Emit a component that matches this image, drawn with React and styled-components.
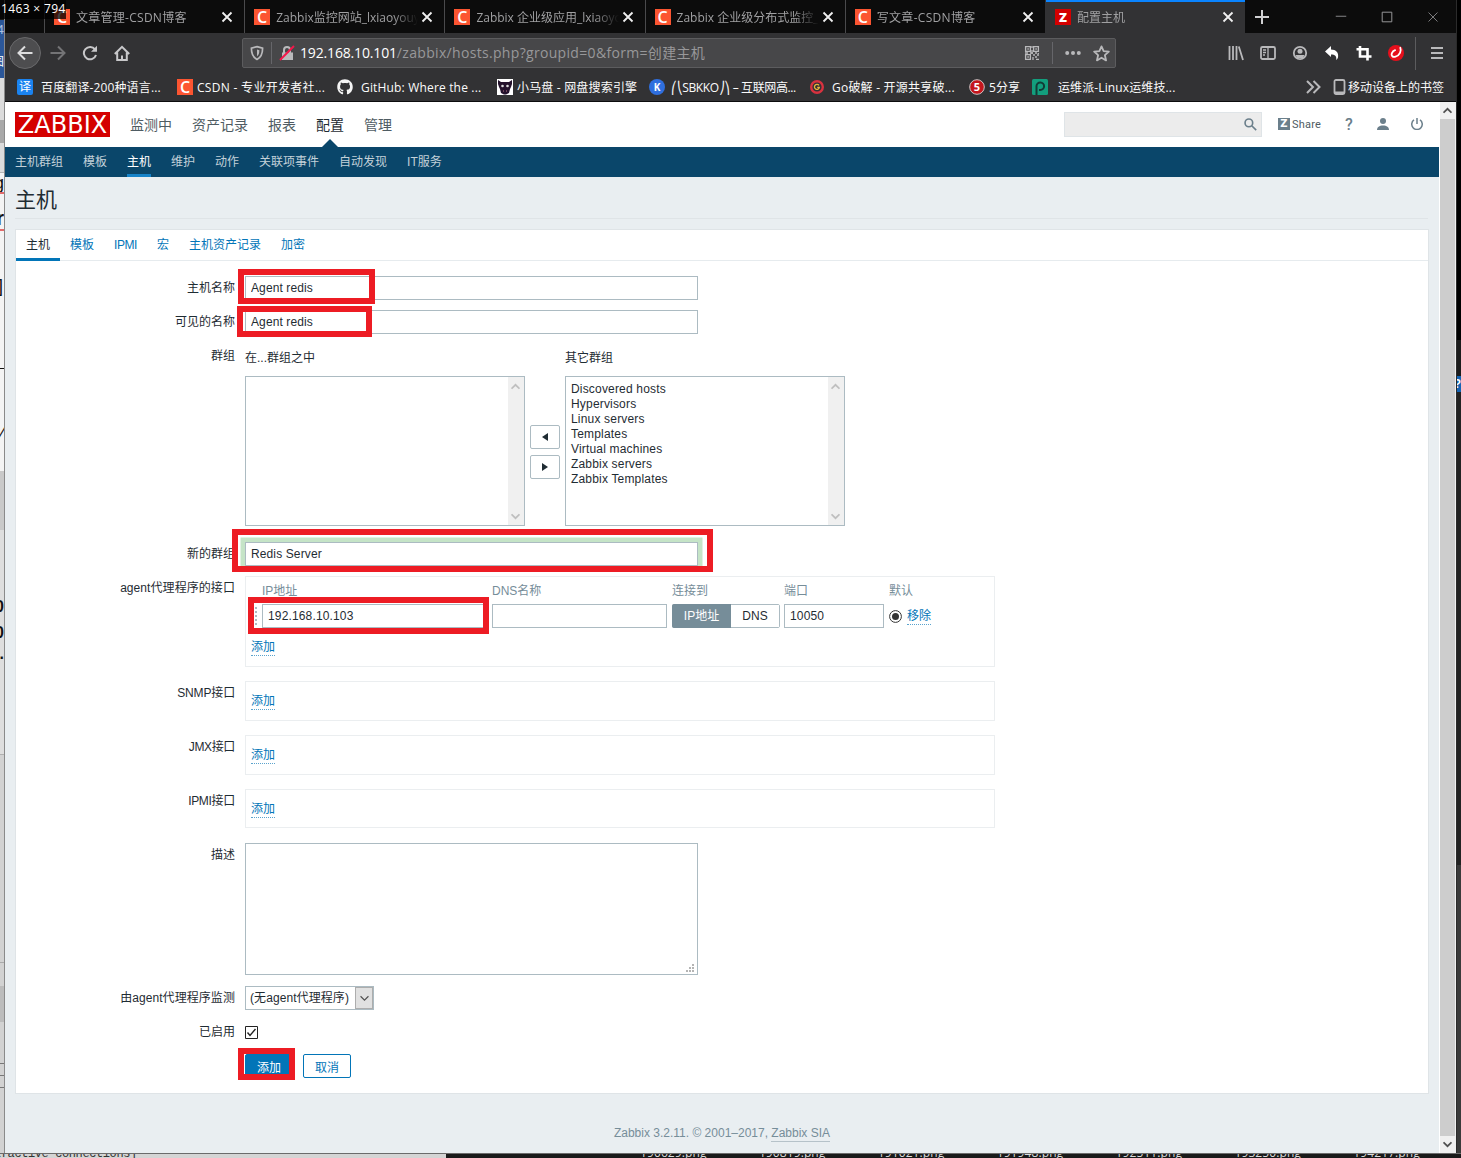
import styled, { createGlobalStyle, css } from "styled-components";
import { FaGithub } from "react-icons/fa";

const uiFont = `"Open Sans", "Noto Sans CJK SC", sans-serif`;
const pageFont = `"Liberation Sans", "Noto Sans CJK SC", sans-serif`;

const GlobalStyle = createGlobalStyle`
  * {
    box-sizing: border-box;
  }

  body {
    margin: 0;
    overflow: hidden;
    background: #111;
    font-family: ${pageFont};
    font-size: 12px;
  }
`;

/* ---------- desktop around the window ---------- */

const Screen = styled.div`
  position: relative;
  display: grid;
  grid-template-columns: 5px 1451px 5px;
  grid-template-rows: 1153px 5px;
  width: 1461px;
  height: 1158px;
  overflow: hidden;
`;

const LeftEdge = styled.div`
  position: relative;
  overflow: hidden;
  background: linear-gradient(
    to bottom,
    #1b1b1b 0 20px,
    #2b579a 20px 78px,
    #dcdcdc 78px 172px,
    #f4f4f4 172px 471px,
    #c9c9c9 471px 530px,
    #dedede 530px 755px,
    #d2d2d2 755px 1153px
  );
  border-right: 1px solid #8a8a8a;
`;

const Fragment = styled.span`
  position: absolute;
  top: ${(p) => p.$top}px;
  right: ${(p) => p.$right || 0}px;
  color: ${(p) => p.$color || "#111"};
  font-size: ${(p) => p.$size || 16}px;
  font-weight: ${(p) => (p.$bold ? 700 : 400)};
  line-height: 1;
  white-space: nowrap;
`;

const EdgeLine = styled.i`
  position: absolute;
  left: 0;
  top: ${(p) => p.$top}px;
  width: 5px;
  height: ${(p) => p.$height || 1}px;
  background: ${(p) => p.$color || "#777"};
`;

const RightEdge = styled.div`
  position: relative;
  overflow: hidden;
  background: linear-gradient(
    to bottom,
    #000 0 340px,
    #1c1c1c 340px 376px,
    #1464b4 376px 392px,
    #222 392px 865px,
    #3a3a3a 865px 1153px
  );
  border-left: 1px solid #2b2b2b;
`;

const BottomEdge = styled.div`
  grid-column: 1 / 4;
  display: flex;
  overflow: hidden;
  background: #1a1a1a;
  border-top: 1px solid #6b6b6b;
`;

const Console = styled.div`
  flex: none;
  width: 446px;
  background: #d4d4d4;
  color: #333;
  font: 12px/14px "Liberation Mono", monospace;
  letter-spacing: -0.4px;

  span {
    display: block;
    margin-top: -7px;
    margin-left: -6px;
  }
`;

const FileNames = styled.div`
  display: flex;
  flex: none;
  padding-left: 194px;
  color: #ddd;
  font: 12px/14px ${uiFont};
  letter-spacing: 0.1px;

  span {
    width: 118.9px;
    margin-top: -8px;
  }
`;

const SizeTip = styled.div`
  position: absolute;
  left: 0;
  top: 0;
  width: 66px;
  height: 19px;
  padding-left: 1px;
  background: rgba(0, 0, 0, 0.75);
  color: #fff;
  font: 12px/18px ${uiFont};
  letter-spacing: 0.35px;
  white-space: nowrap;
`;

/* ---------- browser chrome ---------- */

const Window = styled.div`
  display: flex;
  flex-direction: column;
  width: 1451px;
  height: 1153px;
  background: #323234;
`;

const TabStrip = styled.div`
  display: flex;
  height: 33px;
  padding-left: 39px;
  background: #0c0c0c;
`;

const Tab = styled.div`
  display: flex;
  align-items: center;
  width: 200.2px;
  padding: 1px 11px 0 9px;
  border-left: 1px solid #4a4a4c;
  color: #a0a0a2;
  font: 12px ${uiFont};
  letter-spacing: ${(p) => p.$track || 0}px;

  ${(p) =>
    p.$active &&
    css`
      background: #323234;
      border-left-color: #323234;
      box-shadow: inset 0 2px #0a84ff;
    `}
`;

const TabTitle = styled.span`
  flex: 1;
  margin: -1px 3px 0 6px;
  overflow: hidden;
  white-space: nowrap;
  mask-image: linear-gradient(to right, #000 calc(100% - 25px), transparent);
`;

const Favicon = styled.i`
  display: flex;
  flex: none;
  align-items: center;
  justify-content: center;
  width: 16px;
  height: 16px;
  border-radius: ${(p) => (p.$round ? "50%" : p.$soft ? "2px" : 0)};
  background: ${(p) => p.$bg};
  color: ${(p) => p.$fg || "#fff"};
  font: ${(p) => p.$weight || 700} ${(p) => p.$size || 13}px/1 ${uiFont};
  letter-spacing: 0;
`;

const WindowButtons = styled.div`
  display: flex;
  flex: 1;
  align-items: center;
  justify-content: space-between;
  padding: 0 17px 0 9px;
`;

const CaptionButtons = styled.div`
  display: flex;
  gap: 34px;
`;

const Toolbar = styled.div`
  display: flex;
  align-items: center;
  height: 40px;
  padding-left: 4px;
`;

const BackButton = styled.div`
  display: flex;
  align-items: center;
  justify-content: center;
  width: 32px;
  height: 32px;
  border: 1px solid #69696b;
  border-radius: 50%;
  background: #4d4d4f;
`;

const NavIcons = styled.div`
  display: flex;
  gap: 16px;
  width: 201px;
  padding-left: 9px;
`;

const UrlBar = styled.div`
  display: flex;
  align-items: center;
  width: 874px;
  height: 30px;
  padding: 0 5px 0 6px;
  border: 1px solid #5c5c5e;
  border-radius: 2px;
  background: #474749;
  color: #98989a;
  font: 14px ${uiFont};
  letter-spacing: 0.32px;

  b {
    color: #fff;
    font-weight: 400;
    letter-spacing: -0.16px;
  }
`;

const UrlText = styled.span`
  flex: 1;
  margin: -2px 0 0 5px;
  white-space: nowrap;
`;

const UrlSeparator = styled.i`
  width: 1px;
  height: 22px;
  margin: ${(p) => p.$margin};
  background: #66666a;
`;

const UrlActions = styled.div`
  display: flex;
  align-items: center;
  gap: 12px;
`;

const ToolbarIcons = styled.div`
  display: flex;
  align-items: center;
  gap: 16px;
  margin-left: 112px;
`;

const ToolbarSeparator = styled.i`
  width: 1px;
  height: 33px;
  margin: 0 -3px 0 -5px;
  background: #5c5c5e;
`;

const Bookmarks = styled.div`
  display: flex;
  align-items: center;
  height: 28px;
  padding-left: 12px;
  color: #fbfbfb;
  font: 12px ${uiFont};
`;

const Bookmark = styled.div`
  display: flex;
  flex: none;
  align-items: center;
  gap: ${(p) => p.$gap || 4}px;
  width: ${(p) => p.$width}px;
  letter-spacing: ${(p) => p.$track || 0}px;
  white-space: nowrap;
`;

const Viewport = styled.div`
  display: flex;
  flex: 1;
  border-top: 1px solid #0c0c0d;
  background: #fff;
`;

const Scrollbar = styled.div`
  display: flex;
  flex-direction: column;
  width: 16px;
  margin-left: 1px;
  background: #f0f0f0;
`;

const ScrollArrow = styled.div`
  display: flex;
  align-items: center;
  justify-content: center;
  height: 17px;
  padding-right: 1px;
`;

const ScrollThumb = styled.div`
  flex: 1;
  margin-right: 1px;
  background: #cdcdcd;
`;

/* ---------- zabbix page ---------- */

const Page = styled.div`
  display: flex;
  flex-direction: column;
  width: 1434px;
  background: #e9eef1;
  color: #1f2c33;
`;

const TopBar = styled.header`
  display: flex;
  align-items: center;
  height: 45px;
  padding: 0 16px 0 10px;
  background: #fff;
`;

const Logo = styled.div`
  width: 95px;
  height: 25px;
  background: #d40000;
  color: #fff;
  font: 24px/26px "DejaVu Sans", sans-serif;
  text-align: center;
`;

const MainMenu = styled.nav`
  display: flex;
  flex: 1;
  gap: 20px;
  height: 45px;
  margin-left: 20px;
  font-size: 14px;
`;

const MainItem = styled.a`
  position: relative;
  height: 45px;
  color: ${(p) => (p.$active ? "#1f2c33" : "#4f5c63")};
  line-height: 47px;

  ${(p) =>
    p.$active &&
    css`
      &::after {
        content: "";
        position: absolute;
        left: 6px;
        bottom: 0;
        border: 8px solid transparent;
        border-top: 0;
        border-bottom-color: #0a466a;
      }
    `}
`;

const SearchBox = styled.div`
  display: flex;
  align-items: center;
  justify-content: flex-end;
  width: 198px;
  height: 25px;
  padding: 0 4px 1px 0;
  border: 1px solid #dfe4e7;
  background: #ececec;
`;

const Share = styled.a`
  display: flex;
  align-items: center;
  gap: 2px;
  width: 67px;
  margin: -1px 0 0 16px;
  color: #4f5c63;
  font: 11px Roboto, sans-serif;
  letter-spacing: 0.2px;
`;

const ShareMark = styled.i`
  width: 12px;
  height: 12px;
  background: #6b7f8b;
  color: #fff;
  font: 700 10px/12px "DejaVu Sans", sans-serif;
  letter-spacing: 0;
  text-align: center;
`;

const HelpMark = styled.span`
  width: 32px;
  margin-top: -1px;
  color: #6b7f8b;
  font: 500 16px Roboto, sans-serif;
`;

const AccountIcons = styled.div`
  display: flex;
  gap: 22px;
  margin-top: -1px;
`;

const SubMenu = styled.nav`
  display: flex;
  gap: 20px;
  height: 30px;
  padding-left: 10px;
  background: #0a466a;
`;

const SubItem = styled.a`
  height: 30px;
  color: ${(p) => (p.$active ? "#fff" : "#c3d1d9")};
  line-height: 31px;
  border-bottom: ${(p) => (p.$active ? "3px solid #1683c9" : 0)};
`;

const Title = styled.h1`
  height: 42px;
  margin: 0 11px 10px 10px;
  border-bottom: 1px solid #dfe4e7;
  font-size: 21px;
  font-weight: 400;
  line-height: 45px;
`;

const FormBox = styled.main`
  width: 1414px;
  height: 865px;
  margin-left: 10px;
  border: 1px solid #dfe4e7;
  background: #fff;
`;

const FormTabs = styled.div`
  display: flex;
  height: 31px;
  border-bottom: 1px solid #e6ebee;
`;

const FormTab = styled.a`
  height: 31px;
  padding: 0 10px;
  border-bottom: ${(p) => (p.$active ? "3px solid #0275b8" : 0)};
  color: ${(p) => (p.$active ? "#1f2c33" : "#0275b8")};
  line-height: 31px;
  letter-spacing: ${(p) => p.$track || 0}px;
`;

const Form = styled.div`
  display: flex;
  flex-direction: column;
  padding-top: 15px;
`;

const Row = styled.div`
  display: flex;
  gap: 10px;
  margin-bottom: ${(p) => p.$after ?? 10}px;
`;

const Label = styled.label`
  width: 219px;
  height: 24px;
  line-height: 25px;
  letter-spacing: ${(p) => p.$track || 0}px;
  text-align: right;
`;

const Field = styled.div`
  position: relative;
  display: flex;
`;

const CheckField = styled(Field)`
  align-items: center;
  height: 24px;
`;

const Input = styled.input`
  width: ${(p) => p.$width || 453}px;
  height: 24px;
  padding: 0 5px;
  border: 1px solid #acbbc2;
  border-radius: 0;
  outline: 0;
  background: #fff;
  color: #1f2c33;
  font: 12px ${pageFont};
  letter-spacing: ${(p) => p.$track || 0}px;
  box-shadow: ${(p) => (p.$focus ? "0 0 0 4.5px #c5e4c7" : "none")};
`;

/* red frame drawn over the highlighted fields */
const Marker = styled.i`
  position: absolute;
  left: ${(p) => p.$left}px;
  top: ${(p) => p.$top}px;
  width: ${(p) => p.$width}px;
  height: ${(p) => p.$height}px;
  border: 6px solid #ed1c24;
  pointer-events: none;
`;

const ListColumn = styled.div`
  width: 280px;

  h4 {
    height: 32px;
    margin: 0;
    font-size: 12px;
    font-weight: 400;
    line-height: 28px;
  }
`;

const ListBox = styled.div`
  display: flex;
  justify-content: space-between;
  height: 150px;
  border: 1px solid #acbbc2;

  ul {
    margin: 0;
    padding: 5px;
    list-style: none;
    line-height: 15px;
    letter-spacing: 0.18px;
  }
`;

const ListScroll = styled.div`
  display: flex;
  flex-direction: column;
  justify-content: space-between;
  align-items: center;
  width: 16px;
  padding: 5px 2px 4px 0;
  background: #f0f0f0;
`;

const MoveButtons = styled.div`
  display: flex;
  flex-direction: column;
  gap: 6px;
  width: 40px;
  padding: 81px 5px 0;
`;

const MoveButton = styled.button`
  display: flex;
  align-items: center;
  justify-content: center;
  width: 30px;
  height: 24px;
  padding: 0;
  border: 1px solid #acbbc2;
  border-radius: 2px;
  background: #fff;
`;

const InterfaceBox = styled.div`
  width: 750px;
  height: ${(p) => p.$height}px;
  padding: ${(p) => (p.$table ? "0 5px" : "7px 5px")};
  border: 1px solid #ebeef0;
`;

const InterfaceGrid = styled.div`
  display: grid;
  grid-template-columns: 11px 226px 175px 109px 100px auto;
  column-gap: 4px;
  align-items: center;
  margin: 0 0 7px -4px;
`;

const Head = styled.span`
  height: 27px;
  margin-left: ${(p) => p.$shift || 0}px;
  color: #768d99;
  line-height: 28px;
`;

const Grip = styled.i`
  width: 2px;
  height: 18px;
  margin-left: 8px;
  background: repeating-linear-gradient(#acbbc2 0 2px, transparent 2px 4px);
`;

const Segmented = styled.div`
  display: flex;
  width: 108px;
  height: 24px;
  margin-left: 1px;
  border: 1px solid #acbbc2;
  border-radius: 2px;
  line-height: 22px;
  text-align: center;
`;

const Segment = styled.span`
  width: ${(p) => p.$width}px;
  margin: ${(p) => (p.$on ? "-1px 0 -1px -1px" : 0)};
  border-radius: ${(p) => (p.$on ? "2px 0 0 2px" : 0)};
  background: ${(p) => (p.$on ? "#768d99" : "#fff")};
  color: ${(p) => (p.$on ? "#fff" : "#1f2c33")};
  line-height: ${(p) => (p.$on ? 24 : 22)}px;
`;

const DefaultCell = styled.div`
  display: flex;
  align-items: center;
  gap: 5px;
  margin-left: 1px;
`;

const Link = styled.a`
  display: inline-block;
  height: 17px;
  border-bottom: 1px dotted #5ba3cd;
  color: #0275b8;
  line-height: 17px;
`;

const AddLine = styled.div`
  display: flex;
  padding-top: 4px;
`;

const TextArea = styled.div`
  display: flex;
  align-items: flex-end;
  justify-content: flex-end;
  width: 453px;
  height: 132px;
  padding: 2px 3px;
  border: 1px solid #acbbc2;
`;

const Select = styled.div`
  display: flex;
  width: 129px;
  height: 24px;
  padding-left: 4px;
  border: 1px solid #acbbc2;
  line-height: 23px;

  span {
    flex: 1;
    letter-spacing: 0.08px;
    white-space: nowrap;
  }
`;

const SelectArrow = styled.i`
  display: flex;
  align-items: center;
  justify-content: center;
  width: 18px;
  border: 1px solid #adadad;
  background: #e1e1e1;
`;

const Button = styled.button`
  width: 48px;
  height: 24px;
  margin-right: ${(p) => (p.$primary ? 10 : 0)}px;
  padding: 0;
  border: 1px solid #0275b8;
  border-radius: 2px;
  background: ${(p) => (p.$primary ? "#0275b8" : "#fff")};
  color: ${(p) => (p.$primary ? "#fff" : "#0275b8")};
  font: 12px ${pageFont};
`;

const Footer = styled.footer`
  padding-top: 32px;
  color: #768d99;
  line-height: 15px;
  text-align: center;

  u {
    display: inline-block;
    border-bottom: 1px solid #b6c2c9;
    text-decoration: none;
  }
`;

/* ---------- icons ---------- */

const IconSvg = styled.svg`
  display: block;
  flex: none;
`;

function Icon({ size = 16, color = "#b9b9bb", width = 2, children }) {
  return (
    <IconSvg
      width={size}
      height={size}
      viewBox="0 0 16 16"
      fill="none"
      stroke={color}
      strokeWidth={width}
    >
      {children}
    </IconSvg>
  );
}

const CloseIcon = ({ color = "#f0f0f0", width = 2.4, size = 12 }) => (
  <Icon size={size} color={color} width={width}>
    <path d="M2 2l12 12M14 2L2 14" />
  </Icon>
);

const Chevron = ({ down, color = "#505050", size = 9, width = 3 }) => (
  <Icon size={size} color={color} width={width}>
    <path d={down ? "M1 4l7 7 7-7" : "M1 12l7-7 7 7"} />
  </Icon>
);

const QrIcon = () => (
  <Icon width={1.3}>
    <path d="M1.6 1.6h4.8v4.8H1.6zM9.6 1.6h4.8v4.8H9.6zM1.6 9.6h4.8v4.8H1.6z" />
    <path d="M3.4 4h1.4M11.4 4h1.4M3.4 12h1.4M8 1v2M8 5v4M1 8h3M6 8h3M11 8h2M9 10h2M13 10h2M11 12h2M9 12v3M12 14.3h3M14.3 8v1" />
  </Icon>
);

/* ---------- data ---------- */

const csdn = <Favicon $bg="#fc5531" $size={16} $weight={600}>C</Favicon>;

const tabs = [
  { title: "文章管理-CSDN博客", icon: csdn, track: 0.27 },
  { title: "Zabbix监控网站_lxiaoyouyou", icon: csdn },
  { title: "Zabbix 企业级应用_lxiaoyouy", icon: csdn },
  { title: "Zabbix 企业级分布式监控_lx", icon: csdn },
  { title: "写文章-CSDN博客", icon: csdn, track: 0.3 },
  {
    title: "配置主机",
    icon: <Favicon $bg="#d40000" $size={13} $weight={800}>Z</Favicon>,
    active: true,
  },
];

const bookmarks = [
  {
    text: "百度翻译-200种语言...",
    width: 160,
    gap: 8,
    track: 0.13,
    icon: <Favicon $bg="#1a83f0" $soft $size={12} $weight={400}>译</Favicon>,
  },
  { text: "CSDN - 专业开发者社...", width: 160, track: 0.3, icon: csdn },
  {
    text: "GitHub: Where the ...",
    width: 160,
    gap: 8,
    track: 0.17,
    icon: <FaGithub size={16} color="#f4f4f4" />,
  },
  {
    text: "小马盘 - 网盘搜索引擎",
    width: 152,
    track: 0.18,
    icon: (
      <svg width="16" height="16" viewBox="0 0 16 16">
        <path fill="#fff" d="M0 0h16v16H0z" />
        <path fill="#24122c" d="M1 1l3 2h8l3-2v4l-1 3-1 2-1 4-3 1.5H7L4 14l-1-4-1-2-1-3z" />
        <circle cx="5.5" cy="7" r="1.3" fill="#ddd" />
        <circle cx="10.5" cy="7" r="1.3" fill="#ddd" />
        <path stroke="#b78" d="M6 12h1M9 12h1" />
      </svg>
    ),
  },
  {
    text: "⎛⎝SBKKO⎠⎞ – 互联网高...",
    width: 160,
    gap: 6,
    track: -0.38,
    icon: <Favicon $bg="#2f6fde" $round $size={10}>K</Favicon>,
  },
  {
    text: "Go破解 - 开源共享破...",
    width: 160,
    gap: 7,
    track: 0.22,
    icon: (
      <Icon size={16} color="#d8323f" width={2.4}>
        <circle cx="8" cy="8" r="5.8" />
        <path stroke="#e5b33c" strokeWidth="1.3" d="M10 6.4A2.5 2.5 0 1 0 10.4 8.4H8.2" />
      </Icon>
    ),
  },
  {
    text: "5分享",
    width: 63,
    track: 0.1,
    icon: (
      <svg width="16" height="16" viewBox="0 0 16 16">
        <circle cx="8" cy="8" r="7.3" fill="#c5161d" stroke="#d0c5c5" />
        <text x="8" y="12" fill="#fff" fontSize="11" fontWeight="700" textAnchor="middle">
          5
        </text>
      </svg>
    ),
  },
  {
    text: "运维派-Linux运维技...",
    width: 273,
    gap: 10,
    track: 0.12,
    icon: (
      <svg width="16" height="16" viewBox="0 0 16 16">
        <rect width="16" height="16" rx="1.5" fill="#139e7d" />
        <path fill="none" stroke="#123c37" strokeWidth="2" d="M4.5 16V7a3.8 3.8 0 1 1 3.8 4H7" />
      </svg>
    ),
  },
];

const mainMenu = ["监测中", "资产记录", "报表", "配置", "管理"];
const subMenu = ["主机群组", "模板", "主机", "维护", "动作", "关联项事件", "自动发现", "IT服务"];
const formTabs = ["主机", "模板", "IPMI", "宏", "主机资产记录", "加密"];
const otherGroups = [
  "Discovered hosts",
  "Hypervisors",
  "Linux servers",
  "Templates",
  "Virtual machines",
  "Zabbix servers",
  "Zabbix Templates",
];
const emptyInterfaces = [
  { label: "SNMP接口", height: 40, track: -0.15 },
  { label: "JMX接口", height: 40, track: -0.35 },
  { label: "IPMI接口", height: 39, track: -0.3, after: 15 },
];
const files = [
  "190629.png",
  "190819.png",
  "191021.png",
  "191948.png",
  "192511.png",
  "193250.png",
  "194217.png",
];

/* ---------- sections ---------- */

function BrowserChrome() {
  return (
    <>
      <TabStrip>
        {tabs.map((tab) => (
          <Tab key={tab.title} $active={tab.active} $track={tab.track}>
            {tab.icon}
            <TabTitle>{tab.title}</TabTitle>
            <CloseIcon />
          </Tab>
        ))}
        <WindowButtons>
          <Icon color="#d0d0d2">
            <path d="M8 1v14M1 8h14" />
          </Icon>
          <CaptionButtons>
            <Icon size={12} color="#88888a" width={1.3}>
              <path d="M1 7h14" />
            </Icon>
            <Icon size={12} color="#9a9a9c" width={1.3}>
              <path d="M1.6 1.6h12.8v12.8H1.6z" />
            </Icon>
            <CloseIcon color="#88888a" width={1.2} />
          </CaptionButtons>
        </WindowButtons>
      </TabStrip>

      <Toolbar>
        <BackButton>
          <Icon color="#dededf">
            <path d="M15.5 8H1.5M8 1.5L1.5 8 8 14.5" />
          </Icon>
        </BackButton>
        <NavIcons>
          <Icon color="#747476">
            <path d="M.5 8h14M8 1.5L14.5 8 8 14.5" />
          </Icon>
          <Icon color="#c8c8ca">
            <path d="M13 4.3A6.2 6.2 0 1 0 14 10" />
            <path d="M15 .8v6H9z" fill="#c8c8ca" stroke="none" />
          </Icon>
          <Icon color="#c8c8ca">
            <path d="M.8 9L8 1.8 15.2 9M3.2 7.5V15h9.6V7.5M8 15v-4.5" />
          </Icon>
        </NavIcons>
        <UrlBar>
          <Icon width={1.7}>
            <path d="M8 1.6l5.6 1.6c0 5.5-1.2 9-5.6 11.2C3.6 12.2 2.4 8.7 2.4 3.2z" />
            <path d="M8 4.5l2.4.7c0 3-.8 4.8-2.4 6z" fill="#b9b9bb" stroke="none" />
          </Icon>
          <UrlSeparator $margin="0 7px 0 6px" />
          <Icon>
            <rect x="3" y="7.5" width="11" height="7.5" fill="#b9b9bb" stroke="none" />
            <path d="M5 8V5a3 3 0 0 1 6 0v3" />
            <path d="M1 15L15 1" stroke="#f5164a" />
          </Icon>
          <UrlText>
            <b>192.168.10.101</b>/zabbix/hosts.php?groupid=0&amp;form=创建主机
          </UrlText>
          <UrlActions>
            <QrIcon />
            <UrlSeparator />
            <Icon>
              <g fill="#b9b9bb" stroke="none">
                <circle cx="2.2" cy="8" r="2" />
                <circle cx="8" cy="8" r="2" />
                <circle cx="13.8" cy="8" r="2" />
              </g>
            </Icon>
            <Icon size={17} width={1.7}>
              <path
                strokeLinejoin="round"
                d="M8 1.3l2 4.5 4.9.5-3.7 3.3 1.1 4.9L8 12l-4.3 2.5 1.1-4.9L1.1 6.3 6 5.8z"
              />
            </Icon>
          </UrlActions>
        </UrlBar>
        <ToolbarIcons>
          <Icon width={1.8}>
            <path d="M1.5 1v14M5 1v14M8.5 1v14M10.8 1.5L15 15" />
          </Icon>
          <Icon width={1.8}>
            <rect x="1" y="2" width="14" height="12" rx="1.5" />
            <path d="M8 2v12M3 5h3M3 7.5h3M3 10h2" strokeWidth="1.3" />
          </Icon>
          <Icon width={1.8}>
            <circle cx="8" cy="8" r="6.2" />
            <circle cx="8" cy="6.3" r="2.5" fill="#b9b9bb" stroke="none" />
            <path d="M3.5 10h9L11 13H5z" fill="#b9b9bb" stroke="none" />
          </Icon>
          <Icon>
            <path
              d="M7 1v3.5c5 0 8 3 7 8-.4 1.2-1 2-1.8 2.5.6-4-1.2-5.5-5.2-5.5V12L1 6.5z"
              fill="#fff"
              stroke="none"
            />
          </Icon>
          <Icon color="#fff" width={2.6}>
            <path d="M4 1v10.5h11.5M.5 4.3h11V15.5" />
          </Icon>
          <svg width="16" height="16" viewBox="0 0 16 16">
            <circle cx="8" cy="8" r="8" fill="#e60f1c" />
            <path
              d="M12.3 2.8c1.4 3-.5 7.7-4.8 8.9-2.7.7-4.7-.8-3.7-3.4.8-1.9 1.9-2.7 3.3-3.1"
              fill="none"
              stroke="#fff"
              strokeWidth="1.8"
              strokeLinecap="round"
            />
          </svg>
          <ToolbarSeparator />
          <Icon>
            <path d="M2 3h12M2 8h12M2 13h12" />
          </Icon>
        </ToolbarIcons>
      </Toolbar>

      <Bookmarks>
        {bookmarks.map((mark) => (
          <Bookmark key={mark.text} $width={mark.width} $gap={mark.gap} $track={mark.track}>
            {mark.icon}
            <span>{mark.text}</span>
          </Bookmark>
        ))}
        <Bookmark $width={28}>
          <Icon>
            <path d="M2 2l6 6-6 6M8.5 2l6 6-6 6" />
          </Icon>
        </Bookmark>
        <Bookmark $gap={2}>
          <svg width="13" height="16" viewBox="0 0 13 16">
            <rect x="1.5" y="1" width="10" height="14" rx="1.5" fill="none" stroke="#b9b9bb" strokeWidth="1.8" />
            <path d="M2 13.5h9" stroke="#b9b9bb" strokeWidth="2" />
          </svg>
          <span>移动设备上的书签</span>
        </Bookmark>
      </Bookmarks>
    </>
  );
}

function PageHeader() {
  return (
    <>
      <TopBar>
        <Logo>ZABBIX</Logo>
        <MainMenu>
          {mainMenu.map((item) => (
            <MainItem key={item} $active={item === "配置"}>
              {item}
            </MainItem>
          ))}
        </MainMenu>
        <SearchBox>
          <Icon size={13} color="#6b7f8b">
            <circle cx="6" cy="6" r="4.7" />
            <path d="M9.5 9.5L15 15" />
          </Icon>
        </SearchBox>
        <Share>
          <ShareMark>Z</ShareMark>Share
        </Share>
        <HelpMark>?</HelpMark>
        <AccountIcons>
          <Icon size={12} color="#6b7f8b">
            <g fill="#6b7f8b" stroke="none">
              <circle cx="8" cy="4" r="4" />
              <path d="M0 16c0-4 3-6 8-6s8 2 8 6z" />
            </g>
          </Icon>
          <Icon size={12} color="#6b7f8b">
            <path d="M8 0v8M4 2.5a7 7 0 1 0 8 0" />
          </Icon>
        </AccountIcons>
      </TopBar>
      <SubMenu>
        {subMenu.map((item) => (
          <SubItem key={item} $active={item === "主机"}>
            {item}
          </SubItem>
        ))}
      </SubMenu>
    </>
  );
}

function ScrollArrows() {
  return (
    <ListScroll>
      <Chevron color="#bfbfbf" />
      <Chevron down color="#bfbfbf" />
    </ListScroll>
  );
}

function HostGroups() {
  return (
    <Row $after={16}>
      <Label>群组</Label>
      <Field>
        <ListColumn>
          <h4>在...群组之中</h4>
          <ListBox>
            <ul />
            <ScrollArrows />
          </ListBox>
        </ListColumn>
        <MoveButtons>
          <MoveButton>
            <svg width="6" height="8">
              <path d="M6 0v8L0 4z" fill="#1f2c33" />
            </svg>
          </MoveButton>
          <MoveButton>
            <svg width="6" height="8">
              <path d="M0 0v8l6-4z" fill="#1f2c33" />
            </svg>
          </MoveButton>
        </MoveButtons>
        <ListColumn>
          <h4>其它群组</h4>
          <ListBox>
            <ul>
              {otherGroups.map((group) => (
                <li key={group}>{group}</li>
              ))}
            </ul>
            <ScrollArrows />
          </ListBox>
        </ListColumn>
      </Field>
    </Row>
  );
}

function AgentInterface() {
  return (
    <Row $after={14}>
      <Label $track={0.07}>agent代理程序的接口</Label>
      <Field>
        <InterfaceBox $height={91} $table>
          <InterfaceGrid>
            <i />
            <Head>IP地址</Head>
            <Head>DNS名称</Head>
            <Head $shift={1}>连接到</Head>
            <Head>端口</Head>
            <Head $shift={1}>默认</Head>
            <Grip />
            <Input $width={226} $track={0.15} defaultValue="192.168.10.103" />
            <Input $width={175} />
            <Segmented>
              <Segment $on $width={59}>IP地址</Segment>
              <Segment $width={48}>DNS</Segment>
            </Segmented>
            <Input $width={100} $track={0.15} defaultValue="10050" />
            <DefaultCell>
              <svg width="13" height="13">
                <circle cx="6.5" cy="6.5" r="5.9" fill="#fff" stroke="#333" />
                <circle cx="6.5" cy="6.5" r="3.5" fill="#333" />
              </svg>
              <Link>移除</Link>
            </DefaultCell>
          </InterfaceGrid>
          <AddLine>
            <Link>添加</Link>
          </AddLine>
        </InterfaceBox>
        <Marker $left={3} $top={21} $width={241} $height={37} />
      </Field>
    </Row>
  );
}

function HostForm() {
  return (
    <Form>
      <Row>
        <Label>主机名称</Label>
        <Field>
          <Input $track={0.1} defaultValue="Agent redis" />
          <Marker $left={-7} $top={-7} $width={137} $height={35} />
        </Field>
      </Row>
      <Row>
        <Label>可见的名称</Label>
        <Field>
          <Input $track={0.1} defaultValue="Agent redis" />
          <Marker $left={-8} $top={-4} $width={135} $height={31} />
        </Field>
      </Row>
      <HostGroups />
      <Row>
        <Label>新的群组</Label>
        <Field>
          <Input $focus $track={0.12} defaultValue="Redis Server" />
          <Marker $left={-13} $top={-13} $width={481} $height={43} />
        </Field>
      </Row>
      <AgentInterface />
      {emptyInterfaces.map((item) => (
        <Row key={item.label} $after={item.after ?? 14}>
          <Label $track={item.track}>{item.label}</Label>
          <InterfaceBox $height={item.height}>
            <AddLine>
              <Link>添加</Link>
            </AddLine>
          </InterfaceBox>
        </Row>
      ))}
      <Row $after={11}>
        <Label>描述</Label>
        <TextArea>
          <svg width="8" height="8" fill="#b4b4b4">
            <path d="M6 0h2v2H6zM3 3h2v2H3zM6 3h2v2H6zM0 6h2v2H0zM3 6h2v2H3zM6 6h2v2H6z" />
          </svg>
        </TextArea>
      </Row>
      <Row>
        <Label $track={0.07}>由agent代理程序监测</Label>
        <Select>
          <span>(无agent代理程序)</span>
          <SelectArrow>
            <Chevron down width={2} />
          </SelectArrow>
        </Select>
      </Row>
      <Row>
        <Label>已启用</Label>
        <CheckField>
          <svg width="13" height="13" fill="none" stroke="#222">
            <path d="M.5.5h12v12H.5z" />
            <path d="M2.5 6.5L5 9.5l5.5-6.5" strokeWidth="1.4" />
          </svg>
        </CheckField>
      </Row>
      <Row>
        <Label />
        <Field>
          <Button $primary>添加</Button>
          <Button>取消</Button>
          <Marker $left={-7} $top={-6} $width={57} $height={32} />
        </Field>
      </Row>
    </Form>
  );
}

function App() {
  return (
    <>
      <GlobalStyle />
      <Screen>
        <LeftEdge>
          <Fragment $top={23} $color="#a9c0e4" $size={13}>4</Fragment>
          <Fragment $top={56} $color="#fff" $size={12}>图</Fragment>
          <EdgeLine $top={120} $height={23} $color="#a8a8a8" />
          <EdgeLine $top={172} $color="#b5b5b5" />
          <Fragment $top={174} $size={18}>g</Fragment>
          <EdgeLine $top={192} $height={2} $color="#e36b6b" />
          <Fragment $top={208} $size={20} $bold>r</Fragment>
          <EdgeLine $top={229} $height={2} $color="#e36b6b" />
          <Fragment $top={277} $size={18} $right={1}>]</Fragment>
          <EdgeLine $top={368} $color="#111" />
          <Fragment $top={424} $size={18}>⁄</Fragment>
          <Fragment $top={599} $bold>0</Fragment>
          <Fragment $top={625} $bold>0</Fragment>
          <Fragment $top={646} $bold>.</Fragment>
          <EdgeLine $top={754} $color="#b0b0b0" />
          <EdgeLine $top={962} $color="#aaa" />
          <EdgeLine $top={986} $height={36} $color="#bcbcbc" />
          <EdgeLine $top={1063} />
          <EdgeLine $top={1075} />
          <EdgeLine $top={1087} />
        </LeftEdge>
        <Window>
          <BrowserChrome />
          <Viewport>
            <Page>
              <PageHeader />
              <Title>主机</Title>
              <FormBox>
                <FormTabs>
                  {formTabs.map((tab, i) => (
                    <FormTab key={tab} $active={i === 0} $track={tab === "IPMI" ? -0.45 : 0}>
                      {tab}
                    </FormTab>
                  ))}
                </FormTabs>
                <HostForm />
              </FormBox>
              <Footer>
                Zabbix 3.2.11. © 2001–2017, <u>Zabbix SIA</u>
              </Footer>
            </Page>
            <Scrollbar>
              <ScrollArrow>
                <Chevron />
              </ScrollArrow>
              <ScrollThumb />
              <ScrollArrow>
                <Chevron down />
              </ScrollArrow>
            </Scrollbar>
          </Viewport>
        </Window>
        <RightEdge>
          <Fragment $top={378} $color="#fff" $size={12} $bold>?</Fragment>
        </RightEdge>
        <BottomEdge>
          <Console>
            <span>xfactive connections]</span>
          </Console>
          <FileNames>
            {files.map((file) => (
              <span key={file}>{file}</span>
            ))}
          </FileNames>
        </BottomEdge>
        <SizeTip>1463 × 794</SizeTip>
      </Screen>
    </>
  );
}

export default App;
